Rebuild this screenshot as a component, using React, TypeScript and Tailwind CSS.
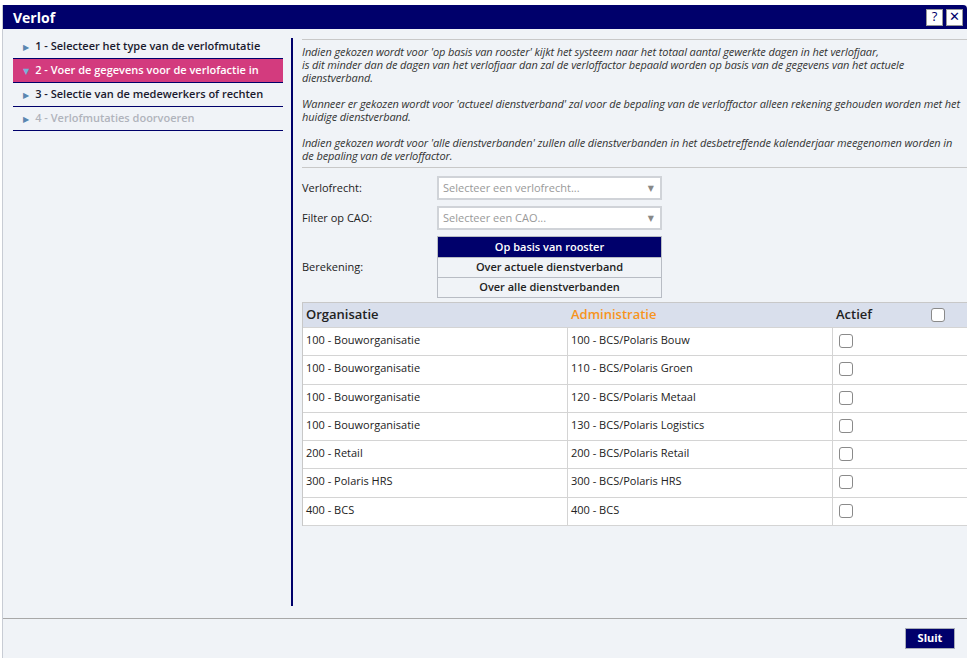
import React from "react";

const rows = [
  ["100 - Bouworganisatie", "100 - BCS/Polaris Bouw"],
  ["100 - Bouworganisatie", "110 - BCS/Polaris Groen"],
  ["100 - Bouworganisatie", "120 - BCS/Polaris Metaal"],
  ["100 - Bouworganisatie", "130 - BCS/Polaris Logistics"],
  ["200 - Retail", "200 - BCS/Polaris Retail"],
  ["300 - Polaris HRS", "300 - BCS/Polaris HRS"],
  ["400 - BCS", "400 - BCS"],
];

const steps = [
  { label: "1 - Selecteer het type van de verlofmutatie", state: "normal" },
  { label: "2 - Voer de gegevens voor de verlofactie in", state: "active" },
  { label: "3 - Selectie van de medewerkers of rechten", state: "normal" },
  { label: "4 - Verlofmutaties doorvoeren", state: "disabled" },
];

const Box = () => (
  <span className="block w-[14px] h-[14px] rounded-[3px] border border-[#8a8a8a] bg-white" />
);

const App = () => {
  return (
    <div className="w-[967px] h-[658px] bg-white pt-[5px] pl-[2px] text-[12px] text-[#222]" style={{ fontFamily: '"Open Sans", "DejaVu Sans", sans-serif' }}>
      <div className="h-[653px] flex flex-col bg-[#f0f3f7] border-l border-[#c8ccd4]">
        <div className="h-[24px] bg-[#00006b] flex items-center justify-between pl-[10px] pr-[4px] rounded-tr-[4px]">
          <span className="text-white font-bold text-[14px]">Verlof</span>
          <div className="flex gap-[3px]">
            <span className="w-[17px] h-[17px] bg-white border border-[#999] flex items-center justify-center text-[13px] text-[#00006b]">?</span>
            <span className="w-[17px] h-[17px] bg-white border border-[#999] flex items-center justify-center text-[13px] font-bold text-[#00006b]">✕</span>
          </div>
        </div>

        <div className="flex flex-1 min-h-0">
          <div className="w-[288px] shrink-0 pt-[6px] pl-[10px]">
            <div className="w-[270px]">
              {steps.map((s) => (
                <div
                  key={s.label}
                  className={
                    "h-[24px] flex items-center gap-[6px] pl-[10px] border-b border-[#00006b] font-semibold text-[11px] whitespace-nowrap overflow-hidden " +
                    (s.state === "active"
                      ? "bg-[#d33b7e] text-white"
                      : s.state === "disabled"
                      ? "text-[#b0b4bc]"
                      : "text-[#1a1a2e]")
                  }
                >
                  <span className={"text-[8px] " + (s.state === "active" ? "text-[#7ab0d8]" : "text-[#5a86b0]")}>
                    {s.state === "active" ? "▼" : "▶"}
                  </span>
                  {s.label}
                </div>
              ))}
            </div>
          </div>

          <div className="mt-[9px] mb-[12px] w-[2px] bg-[#00006b]" />

          <div className="flex-1 pl-[9px] pt-[10px]">
            <div className="border-t border-b border-[#c8c8c8] py-[5px] pr-[2px] italic text-[11px] leading-[13px] text-[#333] tracking-[-0.1px]">
              <p>
                Indien gekozen wordt voor 'op basis van rooster' kijkt het systeem naar het totaal aantal gewerkte dagen in het verlofjaar,
                <br />
                is dit minder dan de dagen van het verlofjaar dan zal de verloffactor bepaald worden op basis van de gegevens van het actuele dienstverband.
              </p>
              <p className="mt-[13px]">
                Wanneer er gekozen wordt voor 'actueel dienstverband' zal voor de bepaling van de verloffactor alleen rekening gehouden worden met het huidige dienstverband.
              </p>
              <p className="mt-[13px]">
                Indien gekozen wordt voor 'alle dienstverbanden' zullen alle dienstverbanden in het desbetreffende kalenderjaar meegenomen worden in de bepaling van de verloffactor.
              </p>
            </div>

            <div className="pt-[8px] flex flex-col gap-[6px] text-[11px]">
              <div className="flex items-center">
                <span className="w-[135px]">Verlofrecht:</span>
                <div className="w-[225px] h-[24px] bg-white border-2 border-[#d0d3d8] flex items-center justify-between px-[4px] text-[#999]">
                  Selecteer een verlofrecht...
                  <span className="text-[8px] text-[#888] pr-[2px]">▼</span>
                </div>
              </div>
              <div className="flex items-center">
                <span className="w-[135px]">Filter op CAO:</span>
                <div className="w-[225px] h-[24px] bg-white border-2 border-[#d0d3d8] flex items-center justify-between px-[4px] text-[#999]">
                  Selecteer een CAO...
                  <span className="text-[8px] text-[#888] pr-[2px]">▼</span>
                </div>
              </div>
              <div className="flex items-center">
                <span className="w-[135px]">Berekening:</span>
                <div className="w-[225px] border border-[#b8bcc4] font-semibold">
                  <div className="h-[20px] flex items-center justify-center bg-[#00006b] text-white">Op basis van rooster</div>
                  <div className="h-[20px] flex items-center justify-center border-t border-[#b8bcc4]">Over actuele dienstverband</div>
                  <div className="h-[20px] flex items-center justify-center border-t border-[#b8bcc4]">Over alle dienstverbanden</div>
                </div>
              </div>
            </div>

            <div className="mt-[4px] border-l border-t border-[#c8c8c8] text-[11px]">
              <div className="h-[24px] bg-[#d9dfec] grid grid-cols-[265px_265px_1fr] text-[13px] font-semibold items-center">
                <span className="pl-[3px] text-[#222]">Organisatie</span>
                <span className="pl-[3px] text-[#f7941d]">Administratie</span>
                <span className="pl-[3px] flex items-center justify-between pr-[22px]">Actief <Box /></span>
              </div>
              {rows.map((r, i) => (
                <div key={i} className="h-[28.3px] bg-white grid grid-cols-[265px_265px_1fr] border-t border-[#d4d4d4]">
                  <span className="pl-[3px] pt-[4px] border-r border-[#d4d4d4]">{r[0]}</span>
                  <span className="pl-[3px] pt-[4px] border-r border-[#d4d4d4]">{r[1]}</span>
                  <span className="pl-[6px] pt-[6px]"><Box /></span>
                </div>
              ))}
              <div className="border-t border-[#d4d4d4]" />
            </div>
          </div>
        </div>

        <div className="h-[40px] border-t border-[#a8a8a8] flex items-center justify-end pr-[12px]">
          <button className="w-[50px] h-[21px] bg-[#00006b] border border-[#a8acb8] text-white font-bold text-[11px]">Sluit</button>
        </div>
      </div>
    </div>
  );
};

export default App;
